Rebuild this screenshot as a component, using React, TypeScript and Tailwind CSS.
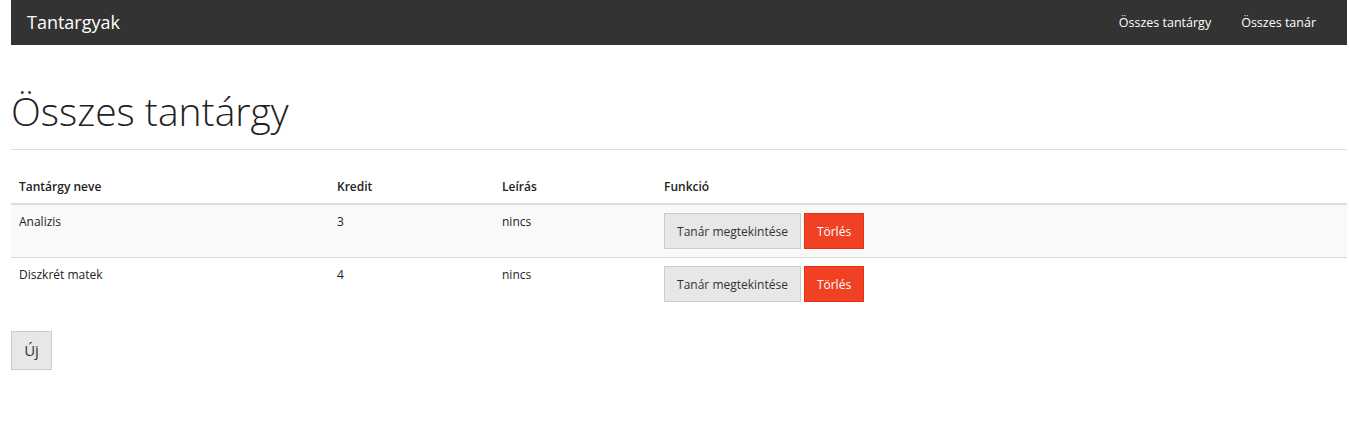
import React from "react";

const rows = [
  { name: "Analizis", kredit: "3", leiras: "nincs" },
  { name: "Diszkrét matek", kredit: "4", leiras: "nincs" },
];

export default function App() {
  return (
    <div className="min-h-[426px] bg-white pl-[11px] pr-[2px] text-[#222]" style={{ fontFamily: '"Open Sans", "Noto Sans", sans-serif' }}>
      <nav className="flex h-[45px] items-center justify-between bg-[#333]">
        <a className="pl-[16px] text-[18px] leading-[45px] text-white">Tantargyak</a>
        <ul className="flex pr-[16px] text-[12.5px] text-white">
          <li className="px-[15px] leading-[45px]">Összes tantárgy</li>
          <li className="px-[15px] leading-[45px]">Összes tanár</li>
        </ul>
      </nav>

      <div className="border-b border-[#dddddd] pt-[44px] pb-[17px]">
        <h1 className="text-[39px] font-light leading-[43px] text-[#222]">Összes tantárgy</h1>
      </div>

      <table className="mt-[20px] w-full border-collapse text-[12px] leading-[17px]">
        <thead>
          <tr className="border-b-2 border-[#dddddd]">
            <th className="w-[318px] p-[8px] text-left font-semibold">Tantárgy neve</th>
            <th className="w-[165px] p-[8px] text-left font-semibold">Kredit</th>
            <th className="w-[162px] p-[8px] text-left font-semibold">Leírás</th>
            <th className="p-[8px] text-left font-semibold">Funkció</th>
          </tr>
        </thead>
        <tbody>
          {rows.map((r, i) => (
            <tr key={r.name} className={i === 0 ? "border-b border-[#dddddd] bg-[#f9f9f9]" : ""}>
              <td className="p-[8px] align-top">{r.name}</td>
              <td className="p-[8px] align-top">{r.kredit}</td>
              <td className="p-[8px] align-top">{r.leiras}</td>
              <td className="p-[8px] align-top">
                <div className="flex gap-[3px]">
                  <button className="h-[36px] w-[137px] border border-[#cccccc] bg-[#e7e7e7] text-[12px] text-[#333]">
                    Tanár megtekintése
                  </button>
                  <button className="h-[36px] w-[60px] border border-[#ea2f10] bg-[#f04124] text-[12px] text-white">
                    Törlés
                  </button>
                </div>
              </td>
            </tr>
          ))}
        </tbody>
      </table>

      <button className="mt-[21px] h-[39px] w-[41px] border border-[#cccccc] bg-[#e7e7e7] text-[15px] text-[#333]">
        Új
      </button>
    </div>
  );
}
